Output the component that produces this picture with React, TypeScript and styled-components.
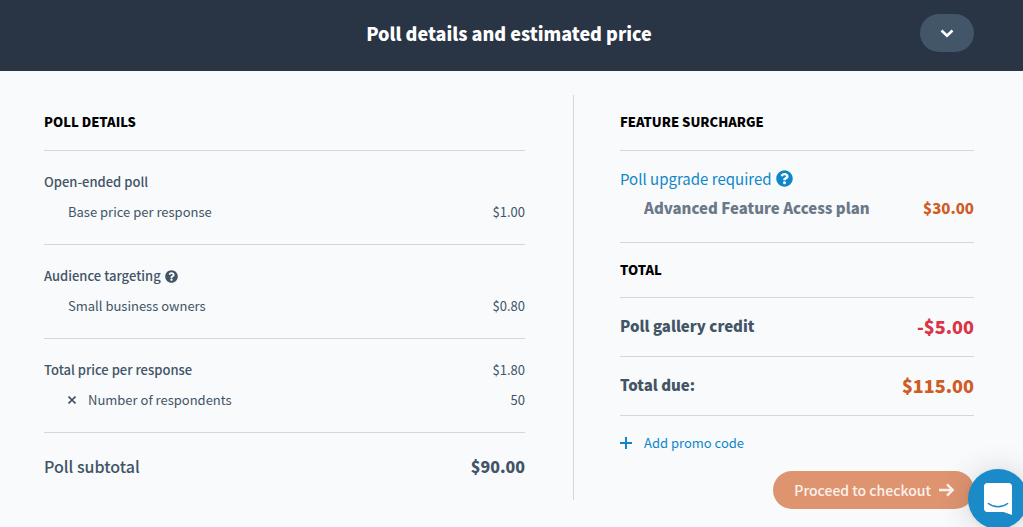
import React from 'react';
import styled, { createGlobalStyle } from 'styled-components';

const slate = '#425466';
const blue = '#0f87c7';
const rule = '#d3d6da';
const heavy = 900;

const GlobalStyle = createGlobalStyle`
  *, *::before, *::after { box-sizing: border-box; }
  body {
    margin: 0;
    background: #f8fafc;
    color: ${slate};
    font-family: "Noto Sans CJK SC", "Open Sans", sans-serif;
    font-size: 13px;
    line-height: 30px;
    overflow-x: hidden;
  }
  button { font: inherit; border: 0; cursor: pointer; }
  h1, h2, h3, dl, dt, dd { margin: 0; }
`;

const Header = styled.header`
  display: grid;
  grid-template-columns: 54px 1fr 54px;
  align-items: center;
  padding: 14px 49px 19px 44px;
  background: #293544;
  color: #fff;
`;

const Title = styled.h1`
  grid-column: 2;
  font-size: 18px;
  line-height: 38px;
  font-weight: ${heavy};
  text-align: center;
`;

const ToggleButton = styled.button`
  display: flex;
  align-items: center;
  justify-content: center;
  height: 38px;
  padding: 0;
  border-radius: 20px;
  background: #435568;
  color: #fff;
`;

const Columns = styled.main`
  display: grid;
  grid-template-columns: 53fr 40fr;
  align-items: start;
  padding: 24px 49px 18px 44px;
`;

const DetailsPane = styled.section`
  padding-right: 48px;
  border-right: 1px solid ${rule};
`;

const PricePane = styled.section`
  padding-left: 46px;
`;

const SectionTitle = styled.h2<{ $compact?: boolean }>`
  padding: 15px 0 ${(p) => (p.$compact ? 15 : 16)}px;
  border-bottom: 1px solid ${rule};
  color: #000;
  font-size: 13px;
  line-height: 24px;
  font-weight: ${heavy};
  text-transform: uppercase;
`;

const Group = styled.dl`
  padding: 16px 0 17px;
  border-bottom: 1px solid ${rule};
`;

const SurchargeGroup = styled(Group)`
  padding: 13px 0 20px;
  font-size: 15px;
  line-height: 29px;
`;

const TotalGroup = styled(Group)`
  padding: 13px 0 15px;
  font-size: 15px;
  font-weight: ${heavy};
`;

const SubtotalGroup = styled(Group)`
  padding: 18px 0 19px;
  border-bottom: 0;
  font-size: 16px;
  font-weight: 500;
`;

const Row = styled.div`
  display: flex;
  justify-content: space-between;
`;

const Label = styled.dt<{ $indent?: boolean; $weight?: number; $color?: string }>`
  display: flex;
  align-items: center;
  padding-left: ${(p) => (p.$indent ? 24 : 0)}px;
  font-weight: ${(p) => p.$weight ?? 'inherit'};
  color: ${(p) => p.$color ?? 'inherit'};
`;

const Amount = styled.dd<{ $size?: number; $bold?: boolean; $color?: string }>`
  font-size: ${(p) => (p.$size ? `${p.$size}px` : 'inherit')};
  font-weight: ${(p) => (p.$bold ? heavy : 'inherit')};
  color: ${(p) => p.$color ?? 'inherit'};
`;

const HelpButton = styled.button`
  display: flex;
  margin-left: 4px;
  padding: 0;
  background: none;
  color: inherit;
`;

const UpgradeLink = styled.a`
  color: ${blue};
  text-decoration: none;
`;

const Times = styled.svg`
  width: 8px;
  height: 8px;
  margin-right: 12px;
`;

const PromoButton = styled.button`
  display: flex;
  align-items: center;
  gap: 12px;
  margin-top: 12px;
  padding: 0;
  background: none;
  color: ${blue};
`;

const Actions = styled.div`
  display: flex;
  justify-content: flex-end;
  margin-top: 13px;
`;

const CheckoutButton = styled.button`
  display: flex;
  align-items: center;
  gap: 8px;
  height: 38px;
  padding: 0 20px 0 21px;
  border-radius: 20px;
  background: #df9470;
  color: #fcf2ed;
  font-size: 14px;
  font-weight: 500;
`;

const ChatButton = styled.button`
  position: fixed;
  right: -5px;
  bottom: -2px;
  display: flex;
  align-items: center;
  justify-content: center;
  width: 60px;
  height: 60px;
  padding: 0;
  border-radius: 50%;
  background: #1b8ac9;
  box-shadow: 0 1px 6px rgba(0, 0, 0, 0.06), 0 2px 32px rgba(0, 0, 0, 0.16);
`;

function Help({ size, label }: { size: number; label: string }) {
  return (
    <HelpButton type="button" aria-label={label}>
      <svg width={size} height={size} viewBox="0 0 512 512" fill="currentColor" aria-hidden="true">
        <path d="M504 256c0 137-111 248-248 248S8 393 8 256 119 8 256 8s248 111 248 248zM262.700 90c-54.500 0-89.300 23-116.500 63.800-3.500 5.300-2.400 12.400 2.700 16.300l34.700 26.300c5.200 3.900 12.600 3 16.700-2.100 17.900-22.700 30.100-35.800 57.300-35.800 20.400 0 45.700 13.100 45.700 33 0 15-12.400 22.700-32.500 34C247.100 238.500 216 254.900 216 296v4c0 6.600 5.400 12 12 12h56c6.600 0 12-5.400 12-12v-1.300c0-28.500 83.200-29.600 83.200-106.700 0-58-60.200-102-116.500-102zM256 338c-25.400 0-46 20.600-46 46s20.600 46 46 46 46-20.600 46-46-20.600-46-46-46z" />
      </svg>
    </HelpButton>
  );
}

export default function App() {
  return (
    <>
      <GlobalStyle />
      <Header>
        <Title>Poll details and estimated price</Title>
        <ToggleButton type="button" aria-label="Collapse details">
          <svg width="14" height="10" viewBox="0 0 14 10" fill="none" stroke="currentColor" strokeWidth="2.6" aria-hidden="true">
            <path d="M1.500 2.500 7 7.700 12.500 2.500" />
          </svg>
        </ToggleButton>
      </Header>

      <Columns>
        <DetailsPane>
          <SectionTitle>Poll details</SectionTitle>
          <Group>
            <Row><Label $weight={500}>Open-ended poll</Label></Row>
            <Row><Label $indent>Base price per response</Label><Amount>$1.00</Amount></Row>
          </Group>
          <Group>
            <Row>
              <Label $weight={500}>Audience targeting<Help size={13} label="About audience targeting" /></Label>
            </Row>
            <Row><Label $indent>Small business owners</Label><Amount>$0.80</Amount></Row>
          </Group>
          <Group>
            <Row><Label $weight={500}>Total price per response</Label><Amount>$1.80</Amount></Row>
            <Row>
              <Label $indent>
                <Times viewBox="0 0 8 8" fill="none" stroke="currentColor" strokeWidth="1.600" aria-hidden="true">
                  <path d="M.5.500l7 7M7.500.500l-7 7" />
                </Times>
                Number of respondents
              </Label>
              <Amount>50</Amount>
            </Row>
          </Group>
          <SubtotalGroup>
            <Row><Label>Poll subtotal</Label><Amount $size={16} $bold>$90.00</Amount></Row>
          </SubtotalGroup>
        </DetailsPane>

        <PricePane>
          <SectionTitle>Feature surcharge</SectionTitle>
          <SurchargeGroup>
            <Row>
              <Label $color={blue}>
                <UpgradeLink href="#upgrade">Poll upgrade required</UpgradeLink>
                <Help size={17} label="About poll upgrades" />
              </Label>
            </Row>
            <Row>
              <Label $indent $weight={heavy} $color="#6b7888">Advanced Feature Access plan</Label>
              <Amount $bold $color="#cf5b25">$30.00</Amount>
            </Row>
          </SurchargeGroup>
          <SectionTitle $compact>Total</SectionTitle>
          <TotalGroup>
            <Row><Label>Poll gallery credit</Label><Amount $size={18} $color="#dc3346">-$5.00</Amount></Row>
          </TotalGroup>
          <TotalGroup>
            <Row><Label>Total due:</Label><Amount $size={18} $color="#cf5b25">$115.00</Amount></Row>
          </TotalGroup>
          <PromoButton type="button">
            <svg width="12" height="12" viewBox="0 0 12 12" fill="none" stroke="currentColor" strokeWidth="2" aria-hidden="true">
              <path d="M6 0v12M0 6h12" />
            </svg>
            Add promo code
          </PromoButton>
          <Actions>
            <CheckoutButton type="button">
              Proceed to checkout
              <svg width="15" height="14" viewBox="0 0 15 14" fill="none" stroke="currentColor" strokeWidth="2.400" aria-hidden="true">
                <path d="M0 7h13.500M8 1.300 13.700 7 8 12.700" />
              </svg>
            </CheckoutButton>
          </Actions>
        </PricePane>
      </Columns>

      <ChatButton type="button" aria-label="Open chat">
        <svg width="28" height="32" viewBox="0 0 28 32" aria-hidden="true">
          <path fill="#fff" d="M28 32s-4.700-1.900-8.400-3H3.200C1.400 29 0 27.500 0 25.700V3.300C0 1.500 1.400 0 3.200 0h21.600C26.600 0 28 1.500 28 3.300V32z" />
          <path d="M4.400 20.500c5.500 4.300 13.700 4.300 19.200 0" fill="none" stroke="#1b8ac9" strokeWidth="1.500" strokeLinecap="round" />
        </svg>
      </ChatButton>
    </>
  );
}
